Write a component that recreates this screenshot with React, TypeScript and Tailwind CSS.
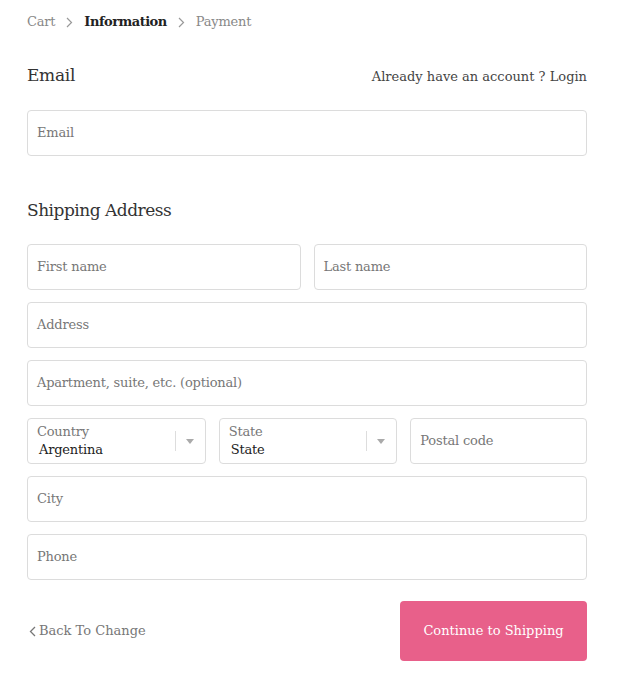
import React from "react";

const font = { fontFamily: '"DejaVu Serif", serif' };

function Field({ placeholder, className = "" }: { placeholder: string; className?: string }) {
  return (
    <div className={`h-[46px] border border-[#dcdcdc] rounded-[4px] flex items-center px-[9px] text-[13px] text-[#777] tracking-[-0.2px] ${className}`}>
      {placeholder}
    </div>
  );
}

function Select({ label, value }: { label: string; value: string }) {
  return (
    <div className="flex-1 h-[46px] border border-[#dcdcdc] rounded-[4px] flex items-center pl-[9px] pr-[11px]">
      <div className="flex-1 flex flex-col leading-[18px] tracking-[-0.2px]">
        <span className="text-[13px] text-[#777]">{label}</span>
        <span className="text-[13px] text-[#222] pl-[2px]">{value}</span>
      </div>
      <div className="w-px h-[20px] bg-[#ddd] mr-[10px]" />
      <svg width="8" height="5" viewBox="0 0 8 5"><path d="M0 0h8L4 5z" fill="#aaa" /></svg>
    </div>
  );
}

function Chevron() {
  return (
    <svg width="7" height="11" viewBox="0 0 7 11" className="mx-[11px]">
      <path d="M1 1 5.5 5.5 1 10" stroke="#999" strokeWidth="1.2" fill="none" />
    </svg>
  );
}

export default function App() {
  return (
    <div className="w-[626px] h-[680px] bg-white pl-[27px] pt-[12px]" style={font}>
      <div className="w-[560px]">
        <div className="flex items-center text-[13px] text-[#888] h-[20px] tracking-[-0.2px]">
          <span>Cart</span>
          <Chevron />
          <span className="font-bold text-[#222] tracking-[-0.5px]">Information</span>
          <Chevron />
          <span>Payment</span>
        </div>
        <div className="flex items-end justify-between mt-[32px] h-[24px]">
          <span className="text-[17px] text-[#333] tracking-[-0.3px]">Email</span>
          <span className="text-[13px] text-[#444] mb-[2px]">Already have an account ? Login</span>
        </div>
        <Field placeholder="Email" className="mt-[22px]" />
        <div className="mt-[42px] text-[17px] text-[#333] tracking-[-0.5px] h-[24px] leading-[24px]">Shipping Address</div>
        <div className="mt-[22px] flex flex-col gap-[12px]">
          <div className="flex gap-[13px]">
            <Field placeholder="First name" className="flex-1" />
            <Field placeholder="Last name" className="flex-1" />
          </div>
          <Field placeholder="Address" />
          <Field placeholder="Apartment, suite, etc. (optional)" />
          <div className="flex gap-[13px]">
            <Select label="Country" value="Argentina" />
            <Select label="State" value="State" />
            <Field placeholder="Postal code" className="flex-1" />
          </div>
          <Field placeholder="City" />
          <Field placeholder="Phone" />
        </div>
        <div className="mt-[21px] flex items-center justify-between">
          <span className="text-[13px] text-[#777] flex items-center pl-[2px]">
            <svg width="7" height="11" viewBox="0 0 7 11" className="mr-[3px]"><path d="M6 1 1.5 5.5 6 10" stroke="#777" strokeWidth="1.3" fill="none" /></svg>
            Back To Change
          </span>
          <button className="w-[187px] h-[60px] rounded-[4px] bg-[#e8608a] text-white text-[13px]">Continue to Shipping</button>
        </div>
      </div>
    </div>
  );
}
